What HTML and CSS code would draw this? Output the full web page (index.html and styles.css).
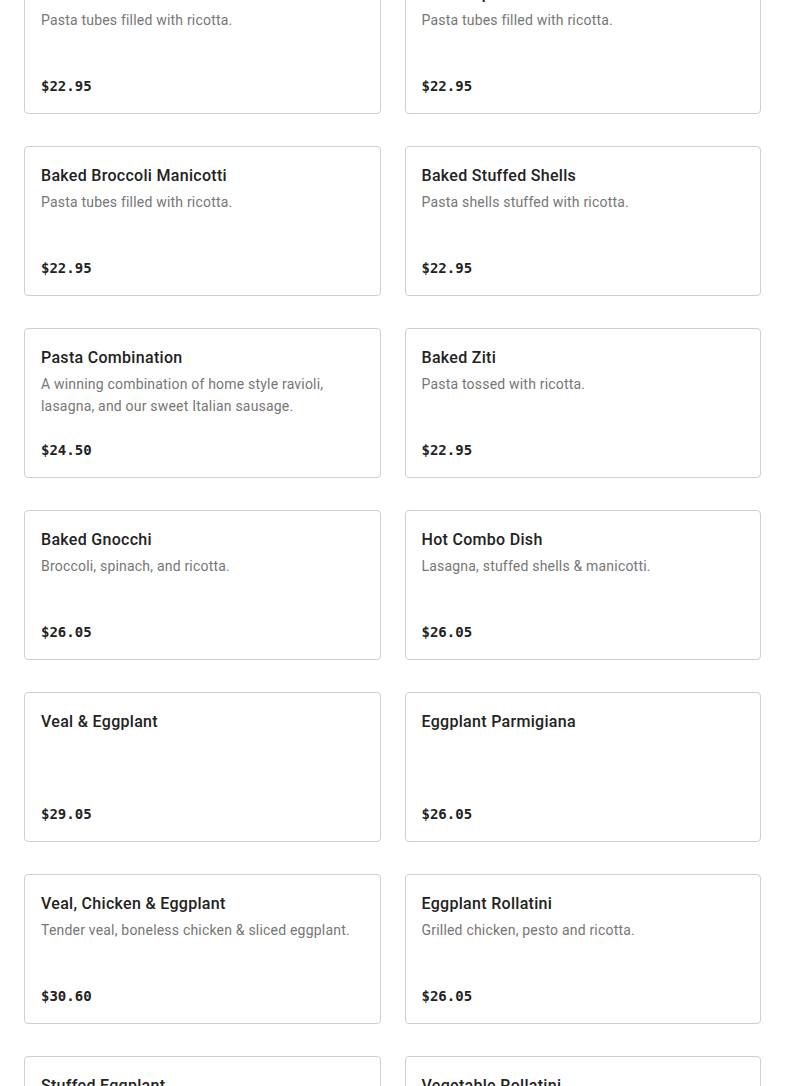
FILE: index.html
```html
<!DOCTYPE html>
<html lang="en">
<head>
<meta charset="utf-8">
<title>Menu</title>
<link rel="stylesheet" href="styles.css">
</head>
<body>
<main class="menu">
  <div class="card"><h3 class="title">Baked Cheese Manicotti</h3><p class="desc">Pasta tubes filled with ricotta.</p><div class="price">$22.95</div></div>
  <div class="card"><h3 class="title">Baked Spinach Manicotti</h3><p class="desc">Pasta tubes filled with ricotta.</p><div class="price">$22.95</div></div>
  <div class="card"><h3 class="title">Baked Broccoli Manicotti</h3><p class="desc">Pasta tubes filled with ricotta.</p><div class="price">$22.95</div></div>
  <div class="card"><h3 class="title">Baked Stuffed Shells</h3><p class="desc">Pasta shells stuffed with ricotta.</p><div class="price">$22.95</div></div>
  <div class="card"><h3 class="title">Pasta Combination</h3><p class="desc">A winning combination of home style ravioli, lasagna, and our sweet Italian sausage.</p><div class="price">$24.50</div></div>
  <div class="card"><h3 class="title">Baked Ziti</h3><p class="desc">Pasta tossed with ricotta.</p><div class="price">$22.95</div></div>
  <div class="card"><h3 class="title">Baked Gnocchi</h3><p class="desc">Broccoli, spinach, and ricotta.</p><div class="price">$26.05</div></div>
  <div class="card"><h3 class="title">Hot Combo Dish</h3><p class="desc">Lasagna, stuffed shells &amp; manicotti.</p><div class="price">$26.05</div></div>
  <div class="card"><h3 class="title">Veal &amp; Eggplant</h3><div class="price">$29.05</div></div>
  <div class="card"><h3 class="title">Eggplant Parmigiana</h3><div class="price">$26.05</div></div>
  <div class="card"><h3 class="title">Veal, Chicken &amp; Eggplant</h3><p class="desc">Tender veal, boneless chicken &amp; sliced eggplant.</p><div class="price">$30.60</div></div>
  <div class="card"><h3 class="title">Eggplant Rollatini</h3><p class="desc">Grilled chicken, pesto and ricotta.</p><div class="price">$26.05</div></div>
  <div class="card"><h3 class="title">Stuffed Eggplant</h3><p class="desc">Eggplant stuffed with ricotta.</p><div class="price">$26.05</div></div>
  <div class="card"><h3 class="title">Vegetable Rollatini</h3><p class="desc">Grilled vegetables and ricotta.</p><div class="price">$26.05</div></div>
</main>
</body>
</html>
```

FILE: styles.css
```css
html, body {
  margin: 0;
  padding: 0;
  background: #ffffff;
  overflow: hidden;
}

body {
  font-family: Roboto, "Liberation Sans", sans-serif;
  color: #222222;
}

.menu {
  display: grid;
  grid-template-columns: 1fr 1fr;
  column-gap: 24px;
  row-gap: 32px;
  padding: 0 24px;
  margin-top: -36px;
}

.card {
  box-sizing: border-box;
  height: 150px;
  border: 1px solid #cfcfcf;
  border-radius: 4px;
  padding: 17px 16px 17px;
  display: flex;
  flex-direction: column;
}

.title {
  margin: 0 0 3px;
  font-size: 16px;
  line-height: 24px;
  font-weight: 500;
  letter-spacing: 0.3px;
  color: #222222;
}

.desc {
  margin: 0;
  font-size: 14px;
  line-height: 22px;
  letter-spacing: 0.2px;
  color: #767676;
}

.price {
  margin-top: auto;
  font-family: "DejaVu Sans Mono", "Liberation Mono", monospace;
  font-weight: bold;
  font-size: 14px;
  line-height: 20px;
  color: #222222;
}
```
